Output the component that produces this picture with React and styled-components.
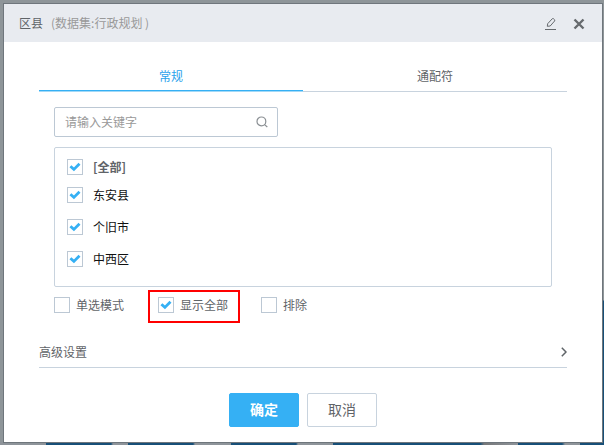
import { useState } from "react";
import styled, { createGlobalStyle } from "styled-components";

const GlobalStyle = createGlobalStyle`
  * {
    box-sizing: border-box;
  }
  body {
    margin: 0;
    font-family: "Noto Sans CJK SC", sans-serif;
    font-size: 12px;
    line-height: 18px;
    color: #5f6468;
  }
  button,
  input {
    font: inherit;
    color: inherit;
  }
`;

// dimmed dashboard behind the dialog
const Backdrop = styled.div`
  min-height: 100vh;
  padding: 3px 1px 2px 3px;
  background:
    linear-gradient(
        to right,
        #8e949a 46px,
        #174f78 46px 111px,
        #8e949a 113px 128px,
        #174f78 128px 193px,
        #8e949a 195px 231px,
        #174f78 231px 296px,
        #8e949a 298px 333px,
        #174f78 333px 480px,
        #757779 484px,
        #8e949a 518px,
        #174f78 518px 562px,
        #8e949a 565px 580px,
        #174f78 580px
      )
      bottom / 100% 3px no-repeat,
    linear-gradient(#8f9699 300px, #174f78 301px) right / 2px 100% no-repeat,
    #8e9599;
`;

const Dialog = styled.section`
  background: #fff;
  border: 1px solid #6f767c;
`;

// header
const Header = styled.header`
  display: flex;
  align-items: center;
  height: 38px;
  padding: 0 17px 0 15px;
  background: #e8ebf0;
`;
const Title = styled.h1`
  flex: 1;
  margin: 0;
  font-size: 12px;
  font-weight: 400;
`;
const Dataset = styled.span`
  margin-left: 8px;
  color: #999;
`;
const IconButton = styled.button`
  display: flex;
  padding: 2px 0 0;
  margin-left: 16px;
  border: 0;
  background: none;
  color: #666a6e;
  cursor: pointer;
`;

const Body = styled.div`
  padding: 20px 35px 15px;
`;

// tabs
const TabList = styled.div`
  display: flex;
`;
const Tab = styled.button`
  flex: 1;
  height: 30px;
  padding: 0 0 2px;
  border: 0;
  border-bottom: 1px solid ${(props) => (props.$active ? "#a3d9f7" : "#c8d3de")};
  box-shadow: ${(props) => (props.$active ? "inset 0 -1px #35b0f4" : "none")};
  background: none;
  color: ${(props) => (props.$active ? "#2ba2ec" : "#5f6468")};
  cursor: pointer;
`;

const TabPanel = styled.div`
  padding: 15px 15px 0;
`;

// search
const SearchBox = styled.label`
  display: flex;
  align-items: center;
  width: 45%;
  height: 30px;
  padding: 0 9px 0 10px;
  border: 1px solid #bcc8d4;
  border-radius: 2px;
  color: #8a8f93;
`;
const SearchInput = styled.input`
  flex: 1;
  min-width: 0;
  padding: 0;
  border: 0;
  outline: 0;
  background: none;
  &::placeholder {
    color: #999;
    opacity: 1;
  }
`;

// list of values
const ValueList = styled.ul`
  margin: 10px 0 0;
  padding: 7px 12px 11px;
  list-style: none;
  border: 1px solid #c8d3de;
  border-radius: 2px;
`;
const ValueRow = styled.li`
  display: flex;
  align-items: center;
  height: ${(props) => (props.$head ? "24px" : "32px")};
  color: ${(props) => (props.$head ? "#5f6468" : "#111")};
  font-weight: ${(props) => (props.$head ? 700 : 400)};
`;

// check box
const CheckLabel = styled.label`
  display: flex;
  align-items: center;
  gap: ${(props) => (props.$wide ? "10px" : "6px")};
  cursor: pointer;
`;
const CheckBox = styled.span`
  display: grid;
  > * {
    grid-area: 1 / 1;
  }
  svg {
    pointer-events: none;
  }
`;
const CheckInput = styled.input`
  appearance: none;
  width: 16px;
  height: 16px;
  margin: 0;
  border: 1px solid #bcc8d4;
  background: #fff;
`;

// options under the list
const Options = styled.div`
  display: flex;
  align-items: flex-start;
  margin-top: 3px;
`;
const Option = styled.div`
  padding: 6px 0 7px;
`;
const MarkedOption = styled(Option)`
  margin: 0 21px 0 24px;
  padding: 4px 10px 7px 8px;
  border: 2px solid #f00;
`;

const Advanced = styled.button`
  display: flex;
  align-items: center;
  justify-content: space-between;
  width: 100%;
  height: 30px;
  margin-top: 15px;
  padding: 0 0 2px;
  border: 0;
  border-bottom: 1px solid #c8d3de;
  background: none;
  cursor: pointer;
`;

const Footer = styled.footer`
  display: flex;
  justify-content: center;
  gap: 8px;
  margin-top: 25px;
`;
const Button = styled.button`
  width: 70px;
  height: 34px;
  padding: 0 0 2px;
  border: 1px solid ${(props) => (props.$primary ? "#35b0f4" : "#c8d3de")};
  border-radius: 2px;
  background: ${(props) => (props.$primary ? "#35b0f4" : "#fff")};
  color: ${(props) => (props.$primary ? "#fff" : "#5f6468")};
  font-size: 14px;
  font-weight: ${(props) => (props.$primary ? 700 : 400)};
  cursor: pointer;
`;

const EditIcon = () => (
  <svg width="13" height="14" viewBox="0 0 13 14" fill="none" stroke="currentColor">
    <path d="M1 12.5h11" />
    <path d="M3.3 9.3l.4-2.6 4.6-5 .9-.2 1.5 1.4v1L6.2 9l-2.9.3z" strokeLinejoin="round" />
  </svg>
);

const CloseIcon = () => (
  <svg width="12" height="12" viewBox="0 0 12 12" stroke="currentColor" strokeWidth="2.4">
    <path d="M1.5 1.5l9 9M10.5 1.5l-9 9" />
  </svg>
);

const SearchIcon = () => (
  <svg width="12" height="12" viewBox="0 0 12 12" fill="none" stroke="currentColor" strokeWidth="1.2">
    <circle cx="5.4" cy="5.4" r="4.4" />
    <path d="M8.6 8.6l2.7 2.4" />
  </svg>
);

const ChevronIcon = () => (
  <svg width="6" height="10" viewBox="0 0 6 10" fill="none" stroke="currentColor" strokeWidth="1.5">
    <path d="M.8 .8L5 5 .8 9.2" />
  </svg>
);

const Check = ({ label, wide, defaultChecked = false }) => {
  const [checked, setChecked] = useState(defaultChecked);

  return (
    <CheckLabel $wide={wide}>
      <CheckBox>
        <CheckInput
          type="checkbox"
          checked={checked}
          onChange={(event) => setChecked(event.target.checked)}
        />
        {checked && (
          <svg width="16" height="16" viewBox="0 0 16 16" fill="none" stroke="#35b0f4" strokeWidth="2.8">
            <path d="M3.4 7.2l3.5 3.2 5.6-5.6" />
          </svg>
        )}
      </CheckBox>
      {label}
    </CheckLabel>
  );
};

const tabs = ["常规", "通配符"];
const values = ["[全部]", "东安县", "个旧市", "中西区"];

const App = () => {
  const [tab, setTab] = useState(0);

  return (
    <Backdrop>
      <GlobalStyle />
      <Dialog role="dialog" aria-labelledby="title">
        <Header>
          <Title id="title">
            区县<Dataset>(数据集:行政规划 )</Dataset>
          </Title>
          <IconButton aria-label="编辑">
            <EditIcon />
          </IconButton>
          <IconButton aria-label="关闭">
            <CloseIcon />
          </IconButton>
        </Header>

        <Body>
          <TabList role="tablist">
            {tabs.map((name, index) => (
              <Tab
                key={name}
                role="tab"
                aria-selected={tab === index}
                $active={tab === index}
                onClick={() => setTab(index)}
              >
                {name}
              </Tab>
            ))}
          </TabList>

          <TabPanel role="tabpanel">
            <SearchBox>
              <SearchInput type="text" placeholder="请输入关键字" aria-label="请输入关键字" />
              <SearchIcon />
            </SearchBox>

            <ValueList>
              {values.map((value, index) => (
                <ValueRow key={value} $head={index === 0}>
                  <Check label={value} wide defaultChecked />
                </ValueRow>
              ))}
            </ValueList>

            <Options>
              <Option>
                <Check label="单选模式" />
              </Option>
              <MarkedOption>
                <Check label="显示全部" defaultChecked />
              </MarkedOption>
              <Option>
                <Check label="排除" />
              </Option>
            </Options>
          </TabPanel>

          <Advanced>
            高级设置
            <ChevronIcon />
          </Advanced>

          <Footer>
            <Button $primary>确定</Button>
            <Button>取消</Button>
          </Footer>
        </Body>
      </Dialog>
    </Backdrop>
  );
};

export default App;
